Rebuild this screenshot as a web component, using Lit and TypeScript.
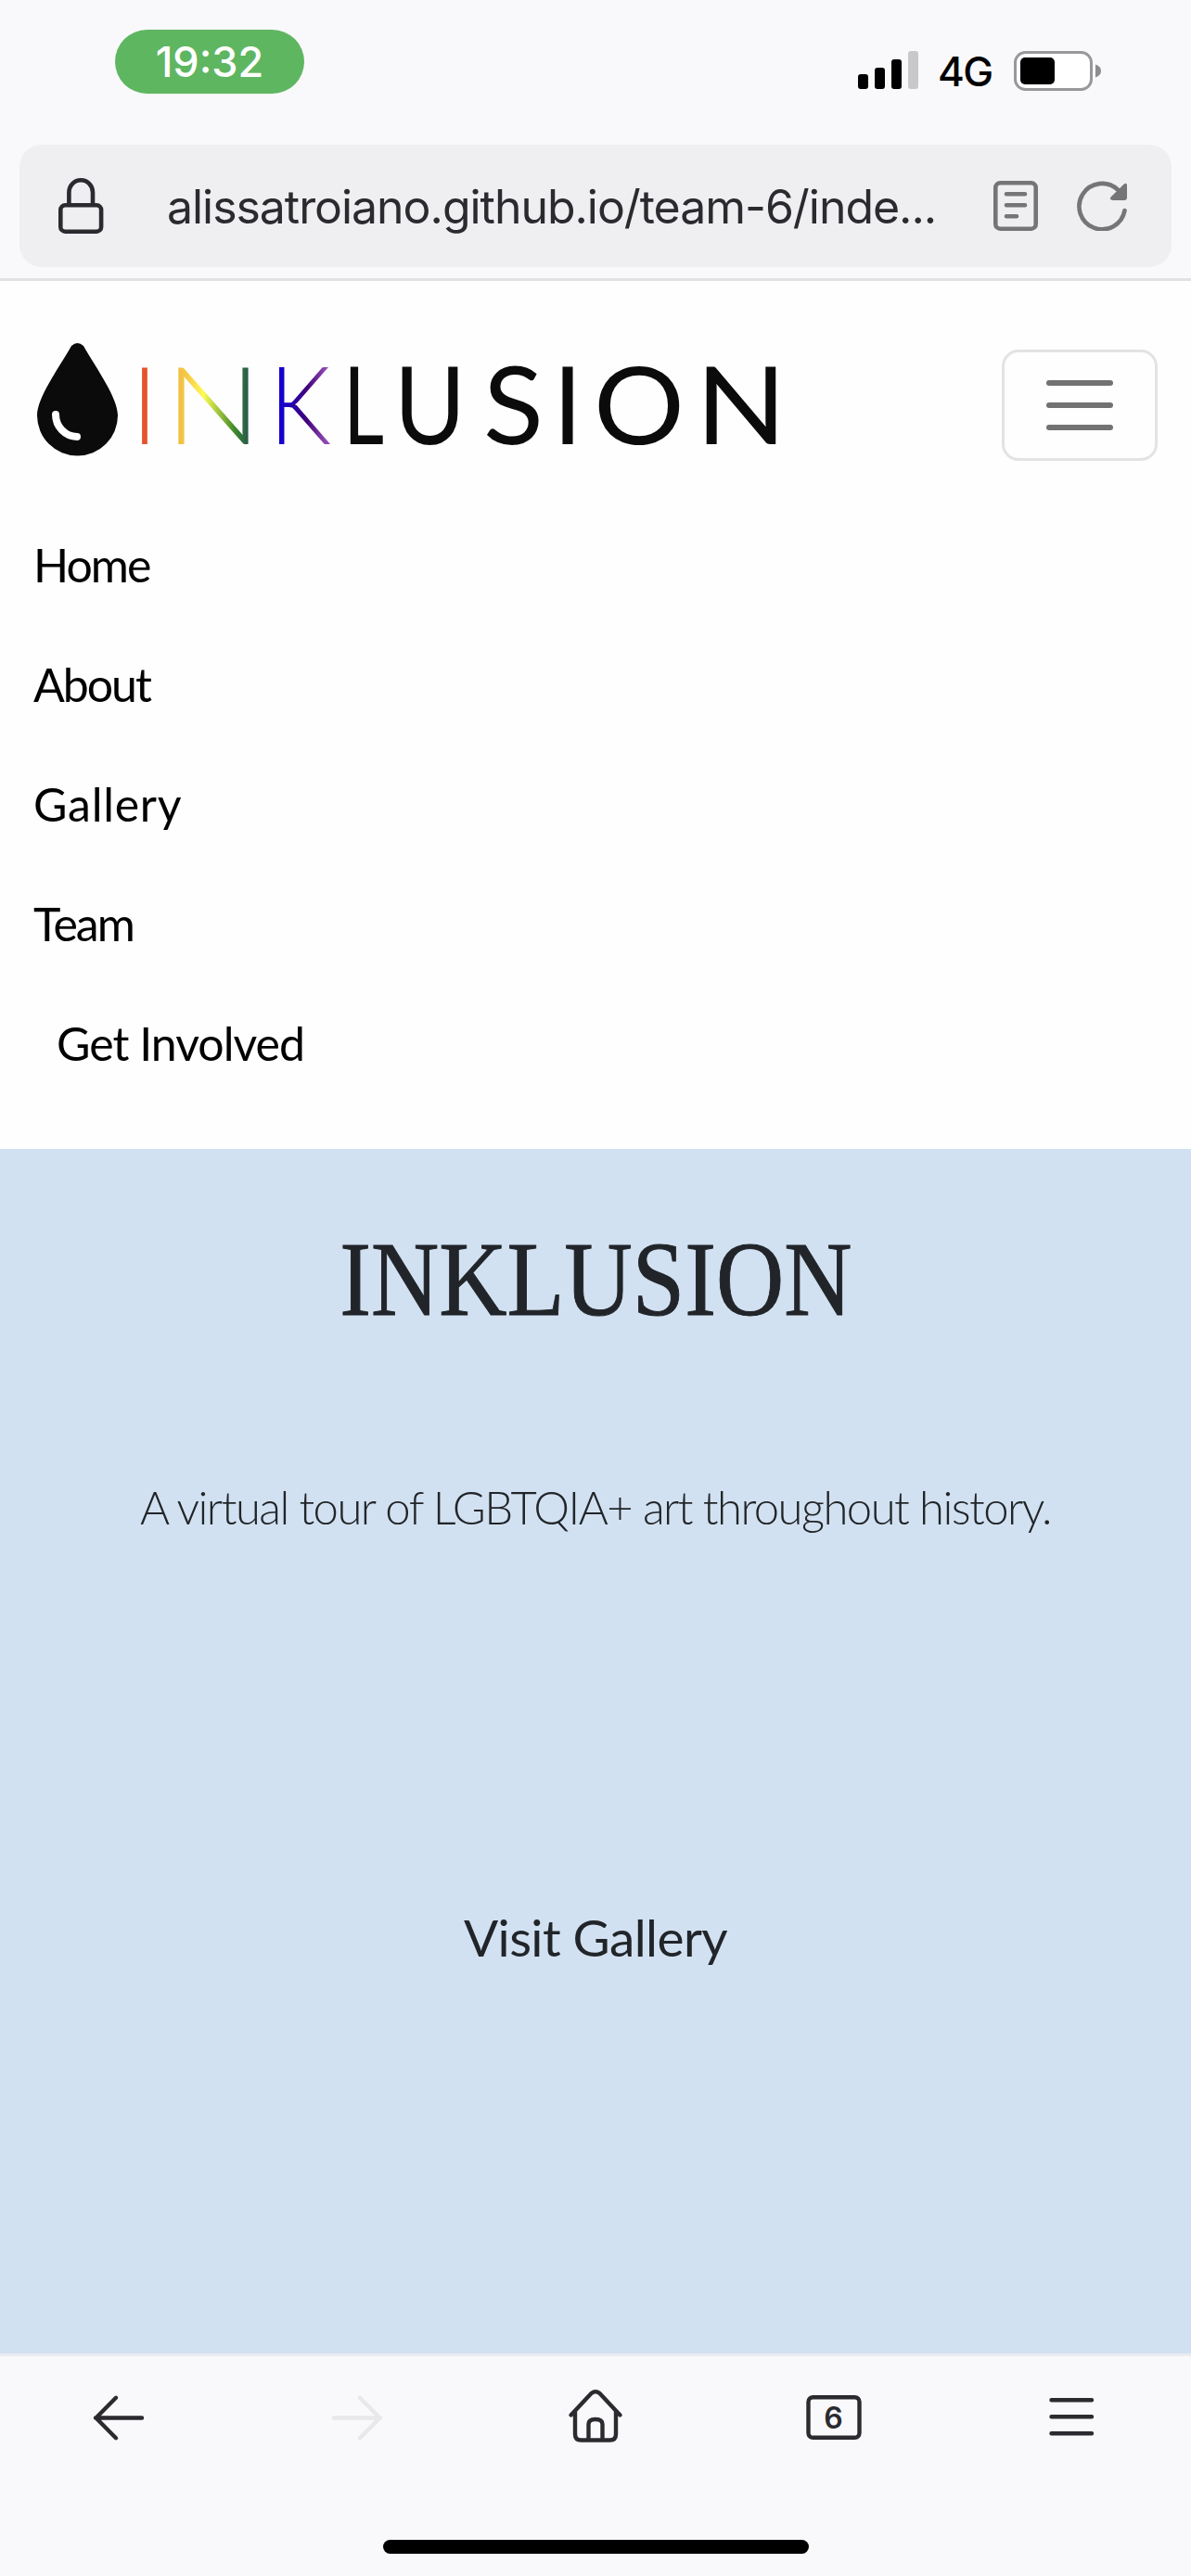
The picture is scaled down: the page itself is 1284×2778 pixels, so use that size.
import { LitElement, html, css, svg } from "lit";
import { customElement } from "lit/decorators.js";
import { styleMap } from "lit/directives/style-map.js";

@customElement("status-bar")
class StatusBar extends LitElement {
  static styles = css`
    :host { display: flex; justify-content: space-between; align-items: flex-start; height: 156px; padding: 0 97px 0 124px; box-sizing: border-box; font-family: Inter, "Liberation Sans", sans-serif; }
    .time { margin-top: 32px; width: 204px; height: 69px; border-radius: 35px; background: #5fb661; color: #fff; font-size: 45px; font-weight: 500; line-height: 70px; text-align: center; }
    .right { display: flex; align-items: center; margin-top: 48px; height: 56px; }
    .net { width: 58px; margin: 1px 24px 0 21px; font-size: 44px; font-weight: 500; line-height: 56px; color: #000; letter-spacing: -1.7px; }
    svg { display: block; }
  `;
  render() {
    return html`
      <div class="time">19:32</div>
      <div class="right">
        <svg width="65" height="42" viewBox="0 0 65 42">
          <rect x="0" y="25" width="11" height="16" rx="3" />
          <rect x="18" y="18" width="11" height="23" rx="3" />
          <rect x="36" y="9" width="11" height="32" rx="3" />
          <rect x="54" y="0" width="11" height="41" rx="3" fill="#c8c8ca" />
        </svg>
        <span class="net">4G</span>
        <svg width="94" height="43" viewBox="0 0 94 43">
          <rect x="1.5" y="1.5" width="82" height="40" rx="11" fill="#fff" stroke="#98989b" stroke-width="3" />
          <rect x="7" y="7" width="37" height="29" rx="5" />
          <path d="M88 14.5q6 2 6 7t-6 7z" fill="#8c8c8e" />
        </svg>
      </div>
    `;
  }
}

@customElement("address-bar")
class AddressBar extends LitElement {
  static styles = css`
    :host { display: block; height: 147px; padding: 0 21px; box-sizing: border-box; border-bottom: 3px solid #e0e1e3; }
    .field { display: flex; align-items: center; height: 132px; padding: 0 48px 0 42px; box-sizing: border-box; border-radius: 24px; background: #efeff1; }
    .url { flex: 1; margin: 2px 0 0 68px; font-family: Inter, "Liberation Sans", sans-serif; font-size: 50px; line-height: 60px; letter-spacing: -1.05px; color: #2b2a2f; white-space: nowrap; }
    svg { display: block; }
    .reload { margin-left: 42px; }
  `;
  render() {
    return html`
      <div class="field">
        <svg width="49" height="60" viewBox="0 0 49 60" fill="none" stroke="#2b2a2f" stroke-width="4.6">
          <rect x="2.3" y="29.3" width="43.8" height="28.4" rx="5" />
          <path d="M11.4 29V15.3a12.8 13 0 0 1 25.6 0V29" />
        </svg>
        <span class="url">alissatroiano.github.io/team-6/inde...</span>
        <svg width="48" height="54" viewBox="0 0 48 54" fill="none" stroke="#757577" stroke-width="4.6" stroke-linecap="round">
          <rect x="2.3" y="2.3" width="43.4" height="49.4" rx="5" />
          <path d="M14 14.2h20M14 26.2h20M14 38.2h11" />
        </svg>
        <svg class="reload" width="54" height="54" viewBox="0 0 54 54" fill="none">
          <path d="M51.5 32A24.7 24.7 0 1 1 44 9.5" stroke="#757577" stroke-width="4.6" stroke-linecap="round" />
          <path d="M50 4.3q4-3.3 4 1V18q0 3-3 3H39q-5-.5-2-4z" fill="#757577" />
        </svg>
      </div>
    `;
  }
}

@customElement("site-nav")
class SiteNav extends LitElement {
  static styles = css`
    :host { display: block; height: 936px; background: #fefefe; font-family: Lato, "Open Sans", sans-serif; }
    .top { display: flex; justify-content: space-between; align-items: center; height: 240px; padding: 0 36px; box-sizing: border-box; }
    .brand { display: block; margin-top: 18px; }
    .mark { font-family: Lato, sans-serif; font-size: 117px; fill: #0b0b0b; }
    .thin { font-weight: 300; fill: url(#rainbow); }
    .toggler { display: flex; flex-direction: column; align-items: center; justify-content: center; gap: 18px; margin-top: 28px; width: 168px; height: 120px; padding: 0; box-sizing: border-box; border: 3px solid #e3e3e3; border-radius: 18px; background: #fefefe; }
    .line { width: 72px; height: 6px; border-radius: 3px; background: #727272; }
    .links { display: flex; flex-direction: column; margin: 0; padding: 2px 36px 0; list-style: none; }
    .link { height: 129px; line-height: 129px; font-size: 50px; color: #000; white-space: nowrap; }
    .inset { padding-left: 25px; }
  `;
  render() {
    const links: [string, number][] = [["Home", -2], ["About", -2], ["Gallery", 0.7], ["Team", -2], ["Get Involved", -1]];
    const thin: [string, number, number][] = [["I", 141.5, 29], ["N", 178, 104], ["K", 290, 67]];
    const solid: [string, number, number][] = [["L", 370, 44], ["U", 425, 77], ["S", 521, 65], ["I", 596, 32], ["O", 640, 98], ["N", 750, 98]];
    const glyph = ([c, x, w]: [string, number, number]) => svg`<tspan x=${x} textLength=${w} lengthAdjust="spacingAndGlyphs">${c}</tspan>`;
    return html`
      <div class="top">
        <svg class="brand" width="820" height="180" viewBox="36 343 820 180">
          <defs>
            <linearGradient id="rainbow" gradientUnits="userSpaceOnUse" x1="150" y1="0" x2="360" y2="0">
              <stop offset="0" stop-color="#e4502c" />
              <stop offset=".06" stop-color="#e9552c" />
              <stop offset=".21" stop-color="#f2c144" />
              <stop offset=".25" stop-color="#f5cc48" />
              <stop offset=".33" stop-color="#fdfb55" />
              <stop offset=".49" stop-color="#3f8a28" />
              <stop offset=".55" stop-color="#2a6048" />
              <stop offset=".72" stop-color="#1400d2" />
              <stop offset=".77" stop-color="#1e00b8" />
              <stop offset=".86" stop-color="#40007c" />
              <stop offset=".95" stop-color="#8a46ae" />
              <stop offset="1" stop-color="#9650b8" />
            </linearGradient>
          </defs>
          <path d="M77 374q6.500-6 13 0C105 400 127 430 127 449a43.500 43.500 0 0 1-87 0C40 430 62 400 77 374z" fill="#0b0b0b" />
          <path d="M60 448A23.500 24 0 0 0 83 472" fill="none" stroke="#fff" stroke-width="8" stroke-linecap="round" />
          <text class="mark" y="480"><tspan class="thin">${thin.map(glyph)}</tspan>${solid.map(glyph)}</text>
        </svg>
        <button class="toggler" aria-label="Toggle navigation">
          <span class="line"></span><span class="line"></span><span class="line"></span>
        </button>
      </div>
      <ul class="links">
        ${links.map(([l, s]) => html`<li class="link ${l === "Get Involved" ? "inset" : ""}" style=${styleMap({ letterSpacing: `${s}px` })}>${l}</li>`)}
      </ul>
    `;
  }
}

@customElement("hero-section")
class HeroSection extends LitElement {
  static styles = css`
    :host { display: flex; flex-direction: column; align-items: center; height: 1299px; padding-top: 81px; box-sizing: border-box; background: #d2e1f1; color: #212529; font-family: Lato, "Open Sans", sans-serif; white-space: nowrap; }
    .title { margin: 0; height: 120px; line-height: 120px; font-family: "Liberation Serif", serif; font-weight: 400; font-size: 114px; transform: scaleX(0.89); -webkit-text-stroke: 1px #212529; }
    .lead { margin: 155px 0 0; height: 60px; line-height: 60px; font-size: 49px; font-weight: 300; letter-spacing: -1.55px; }
    .visit { margin-top: 401px; height: 66px; line-height: 66px; font-size: 55px; letter-spacing: -0.6px; }
  `;
  render() {
    return html`
      <h1 class="title">INKLUSION</h1>
      <p class="lead">A virtual tour of LGBTQIA+ art throughout history.</p>
      <a class="visit">Visit Gallery</a>
    `;
  }
}

@customElement("tool-bar")
class ToolBar extends LitElement {
  static styles = css`
    :host { display: block; height: 240px; box-sizing: border-box; border-top: 3px solid #ebebf0; }
    .tools { display: grid; grid-template-columns: repeat(5, 1fr); justify-items: center; align-items: center; height: 132px; }
    .tool { display: block; fill: none; stroke: #2b2a2f; stroke-width: 4.4; stroke-linecap: round; stroke-linejoin: round; }
    .off { stroke: #e8e8eb; }
    .count { font-family: Inter, "Liberation Sans", sans-serif; font-size: 32px; font-weight: 600; fill: #2b2a2f; stroke: none; }
    .grip { width: 459px; height: 15px; margin: 66px auto 0; border-radius: 8px; background: #000; }
  `;
  render() {
    const icons = [
      svg`<path d="M10 34.500H60M32 12.800L10.500 34.500L32 56.200" />`,
      svg`<path d="M60 34.500H10M38 12.800L59.500 34.500L38 56.200" />`,
      svg`<path d="M8.500 31.500L30.500 8Q35 4.500 39.500 8L61.500 31.500M13 28V52Q13 58.500 19.500 58.500H50.500Q57 58.500 57 52V28M27.500 58V41.500Q27.500 36 35 36T42.500 41.500V58" />`,
      svg`<rect x="7.500" y="12.200" width="55" height="43.600" rx="5" /><text class="count" x="34.500" y="45.500" text-anchor="middle">6</text>`,
      svg`<path d="M12.500 15.200H56M12.500 33.200H56M12.500 51.200H56" />`,
    ];
    return html`
      <div class="tools">
        ${icons.map((i, n) => html`<svg class="tool ${n === 1 ? "off" : ""}" width="70" height="68" viewBox="0 0 70 68">${i}</svg>`)}
      </div>
      <div class="grip"></div>
    `;
  }
}

@customElement("app-root")
class AppRoot extends LitElement {
  static styles = css`
    :host { display: flex; flex-direction: column; width: 1284px; height: 2778px; overflow: hidden; background: #f9f9fb; }
  `;
  render() {
    return html`
      <status-bar></status-bar>
      <address-bar></address-bar>
      <site-nav></site-nav>
      <hero-section></hero-section>
      <tool-bar></tool-bar>
    `;
  }
}
